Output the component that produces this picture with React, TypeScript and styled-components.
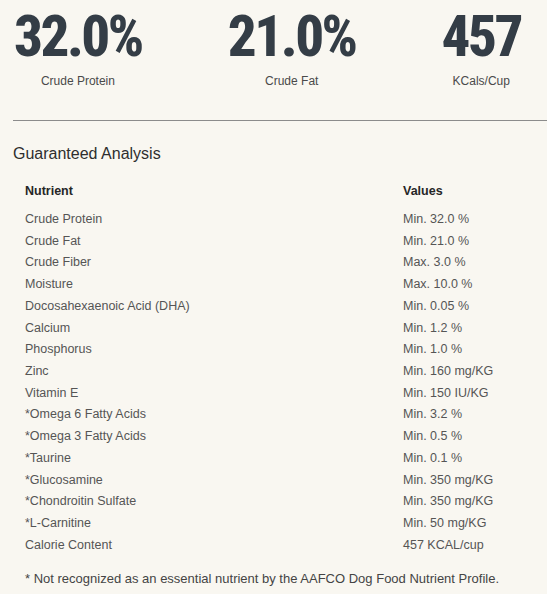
import React, { FC } from 'react';
import styled, { createGlobalStyle } from 'styled-components';

const GlobalStyle = createGlobalStyle`
  html, body {
    margin: 0;
    padding: 0;
    background: #f9f7f1;
  }
  body {
    font-family: "Liberation Sans", Arial, sans-serif;
    color: #333;
  }
`;

interface IRow {
  nutrient: string;
  value: string;
}

const stats = [
  { figure: '32.0%', label: 'Crude Protein' },
  { figure: '21.0%', label: 'Crude Fat' },
  { figure: '457', label: 'KCals/Cup' },
];

const rows: IRow[] = [
  { nutrient: 'Crude Protein', value: 'Min. 32.0 %' },
  { nutrient: 'Crude Fat', value: 'Min. 21.0 %' },
  { nutrient: 'Crude Fiber', value: 'Max. 3.0 %' },
  { nutrient: 'Moisture', value: 'Max. 10.0 %' },
  { nutrient: 'Docosahexaenoic Acid (DHA)', value: 'Min. 0.05 %' },
  { nutrient: 'Calcium', value: 'Min. 1.2 %' },
  { nutrient: 'Phosphorus', value: 'Min. 1.0 %' },
  { nutrient: 'Zinc', value: 'Min. 160 mg/KG' },
  { nutrient: 'Vitamin E', value: 'Min. 150 IU/KG' },
  { nutrient: '*Omega 6 Fatty Acids', value: 'Min. 3.2 %' },
  { nutrient: '*Omega 3 Fatty Acids', value: 'Min. 0.5 %' },
  { nutrient: '*Taurine', value: 'Min. 0.1 %' },
  { nutrient: '*Glucosamine', value: 'Min. 350 mg/KG' },
  { nutrient: '*Chondroitin Sulfate', value: 'Min. 350 mg/KG' },
  { nutrient: '*L-Carnitine', value: 'Min. 50 mg/KG' },
  { nutrient: 'Calorie Content', value: '457 KCAL/cup' },
];

const Page = styled.div`
  width: 547px;
  min-height: 594px;
  overflow: hidden;
`;

const StatsBar = styled.div`
  display: flex;
  justify-content: space-between;
  padding: 8px 26px 0 14px;
  height: 120px;
  box-sizing: border-box;
`;

const Stat = styled.div`
  display: flex;
  flex-direction: column;
  align-items: center;
`;

const Figure = styled.div`
  font-family: Roboto, "Open Sans", sans-serif;
  font-stretch: 75%;
  font-weight: 800;
  font-size: 57px;
  line-height: 58px;
  color: #343d46;
  letter-spacing: -2.5px;
`;

const StatLabel = styled.div`
  font-size: 12px;
  color: #4a4a4a;
  margin-top: 8px;
`;

const Divider = styled.hr`
  margin: 0 0 0 13px;
  border: none;
  border-top: 1px solid #8c8c8c;
`;

const Heading = styled.h2`
  margin: 23px 0 0 13px;
  font-size: 16px;
  font-weight: 400;
  color: #2e2e2e;
  line-height: 20px;
`;

const Table = styled.div`
  margin: 17px 0 0 25px;
`;

const Row = styled.div<{ head?: boolean }>`
  display: grid;
  grid-template-columns: 378px 1fr;
  height: ${p => (p.head ? '28px' : '21.73px')};
  line-height: ${p => (p.head ? '20px' : '21.73px')};
  font-size: 12.5px;
  font-weight: ${p => (p.head ? 700 : 400)};
  color: ${p => (p.head ? '#262626' : '#555')};
`;

const Footnote = styled.p`
  margin: 14px 0 0 25px;
  font-size: 13px;
  color: #444;
`;

const App: FC = () => {
  return (
    <Page>
      <GlobalStyle />
      <StatsBar>
        {stats.map(s => (
          <Stat key={s.label}>
            <Figure>{s.figure}</Figure>
            <StatLabel>{s.label}</StatLabel>
          </Stat>
        ))}
      </StatsBar>
      <Divider />
      <Heading>Guaranteed Analysis</Heading>
      <Table>
        <Row head>
          <span>Nutrient</span>
          <span>Values</span>
        </Row>
        {rows.map(r => (
          <Row key={r.nutrient}>
            <span>{r.nutrient}</span>
            <span>{r.value}</span>
          </Row>
        ))}
      </Table>
      <Footnote>* Not recognized as an essential nutrient by the AAFCO Dog Food Nutrient Profile.</Footnote>
    </Page>
  );
};

export default App;
